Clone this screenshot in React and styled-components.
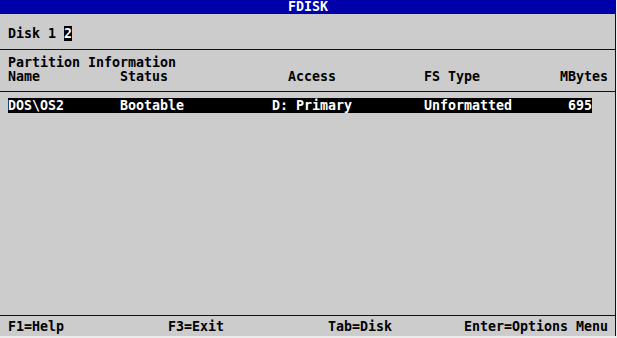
import React from 'react';
import styled, { createGlobalStyle } from 'styled-components';

const GlobalStyle = createGlobalStyle`
  html, body {
    margin: 0;
    padding: 0;
    background: #ececec;
  }
`;

const Screen = styled.div`
  width: 616px;
  height: 336px;
  display: flex;
  flex-direction: column;
  background: #cccccc;
  color: #000;
  font-family: "DejaVu Sans Mono", "Liberation Mono", monospace;
  font-size: 13.3px;
  font-weight: bold;
  line-height: 14px;
  box-sizing: border-box;
  border-right: 1px solid #111;
`;

const TitleBar = styled.div`
  height: 14px;
  background: #0000aa;
  color: #fff;
  text-align: center;
  margin-right: -1px;
`;

const DiskBar = styled.div`
  padding: 12px 8px 8px;
  border-bottom: 1px solid #111;
  white-space: pre;
`;

const Selected = styled.span`
  background: #000;
  color: #fff;
  display: inline-block;
  line-height: 15px;
`;

const Header = styled.div`
  padding: 6px 8px 7px;
  border-bottom: 1px solid #111;
`;

const Columns = styled.div`
  display: grid;
  grid-template-columns: 112px 168px 136px 136px 48px;
  white-space: pre;
`;

const Col = styled.span`
  text-align: ${(p) => (p.right ? 'right' : 'left')};
`;

const List = styled.div`
  flex: 1;
  padding: 6px 8px 0;
`;

const Row = styled.div`
  display: grid;
  grid-template-columns: 112px 152px 152px 136px 32px;
  width: 584px;
  height: 15px;
  line-height: 15px;
  white-space: pre;
  background: ${(p) => (p.active ? '#000' : 'transparent')};
  color: ${(p) => (p.active ? '#fff' : '#000')};
`;

const Footer = styled.div`
  border-top: 1px solid #111;
  padding: 4px 8px 0;
  height: 21px;
  box-sizing: border-box;
  display: grid;
  grid-template-columns: 160px 160px 136px 144px;
  white-space: pre;
`;

const partitions = [
  { name: 'DOS\\OS2', status: 'Bootable', access: 'D: Primary', fs: 'Unformatted', size: '695' },
];

export default function App() {
  return (
    <>
      <GlobalStyle />
      <Screen>
        <TitleBar>FDISK</TitleBar>
        <DiskBar>
          Disk 1 <Selected>2</Selected>
        </DiskBar>
        <Header>
          <div>Partition Information</div>
          <Columns>
            <Col>Name</Col>
            <Col>Status</Col>
            <Col>Access</Col>
            <Col>FS Type</Col>
            <Col right>MBytes</Col>
          </Columns>
        </Header>
        <List>
          {partitions.map((p) => (
            <Row key={p.name} active>
              <Col>{p.name}</Col>
              <Col>{p.status}</Col>
              <Col>{p.access}</Col>
              <Col>{p.fs}</Col>
              <Col right>{p.size}</Col>
            </Row>
          ))}
        </List>
        <Footer>
          <span>F1=Help</span>
          <span>F3=Exit</span>
          <span>Tab=Disk</span>
          <span>Enter=Options Menu</span>
        </Footer>
      </Screen>
    </>
  );
}
